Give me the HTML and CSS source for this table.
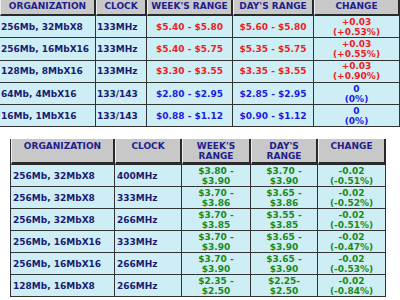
FILE: index.html
```html
<!DOCTYPE html>
<html lang="en">
<head>
  <meta charset="UTF-8">
  <title>DRAM Spot Prices</title>
  <link rel="stylesheet" href="styles.css">
</head>
<body>
  <table class="prices top">
    <colgroup>
      <col class="c-org"><col class="c-clk"><col class="c-wk"><col class="c-day"><col class="c-chg">
    </colgroup>
    <thead>
      <tr>
        <th>ORGANIZATION</th>
        <th>CLOCK</th>
        <th>WEEK'S RANGE</th>
        <th>DAY'S RANGE</th>
        <th>CHANGE</th>
      </tr>
    </thead>
    <tbody>
      <tr class="up">
        <td class="name">256Mb, 32MbX8</td><td class="name">133MHz</td>
        <td>$5.40 - $5.80</td><td>$5.60 - $5.80</td><td>+0.03<br>(+0.53%)</td>
      </tr>
      <tr class="up">
        <td class="name">256Mb, 16MbX16</td><td class="name">133MHz</td>
        <td>$5.40 - $5.75</td><td>$5.35 - $5.75</td><td>+0.03<br>(+0.55%)</td>
      </tr>
      <tr class="up">
        <td class="name">128Mb, 8MbX16</td><td class="name">133MHz</td>
        <td>$3.30 - $3.55</td><td>$3.35 - $3.55</td><td>+0.03<br>(+0.90%)</td>
      </tr>
      <tr class="flat">
        <td class="name">64Mb, 4MbX16</td><td class="name">133/143</td>
        <td>$2.80 - $2.95</td><td>$2.85 - $2.95</td><td>0<br>(0%)</td>
      </tr>
      <tr class="flat">
        <td class="name">16Mb, 1MbX16</td><td class="name">133/143</td>
        <td>$0.88 - $1.12</td><td>$0.90 - $1.12</td><td>0<br>(0%)</td>
      </tr>
    </tbody>
  </table>

  <table class="prices bottom">
    <colgroup>
      <col class="c-org"><col class="c-clk"><col class="c-wk"><col class="c-day"><col class="c-chg">
    </colgroup>
    <thead>
      <tr>
        <th>ORGANIZATION</th>
        <th>CLOCK</th>
        <th>WEEK'S<br>RANGE</th>
        <th>DAY'S<br>RANGE</th>
        <th>CHANGE</th>
      </tr>
    </thead>
    <tbody>
      <tr class="down">
        <td class="name">256Mb, 32MbX8</td><td class="name">400MHz</td>
        <td>$3.80 -<br>$3.90</td><td>$3.70 -<br>$3.90</td><td>-0.02<br>(-0.51%)</td>
      </tr>
      <tr class="down">
        <td class="name">256Mb, 32MbX8</td><td class="name">333MHz</td>
        <td>$3.70 -<br>$3.86</td><td>$3.65 -<br>$3.86</td><td>-0.02<br>(-0.52%)</td>
      </tr>
      <tr class="down">
        <td class="name">256Mb, 32MbX8</td><td class="name">266MHz</td>
        <td>$3.70 -<br>$3.85</td><td>$3.55 -<br>$3.85</td><td>-0.02<br>(-0.51%)</td>
      </tr>
      <tr class="down">
        <td class="name">256Mb, 16MbX16</td><td class="name">333MHz</td>
        <td>$3.70 -<br>$3.90</td><td>$3.65 -<br>$3.90</td><td>-0.02<br>(-0.47%)</td>
      </tr>
      <tr class="down">
        <td class="name">256Mb, 16MbX16</td><td class="name">266MHz</td>
        <td>$3.70 -<br>$3.90</td><td>$3.65 -<br>$3.90</td><td>-0.02<br>(-0.53%)</td>
      </tr>
      <tr class="down">
        <td class="name">128Mb, 16MbX8</td><td class="name">266MHz</td>
        <td>$2.35 -<br>$2.50</td><td>$2.25-<br>$2.50</td><td>-0.02<br>(-0.84%)</td>
      </tr>
    </tbody>
  </table>
</body>
</html>
```

FILE: styles.css
```css
body {
  margin: 0;
  background: #fff;
  font-family: "DejaVu Sans", Verdana, sans-serif;
  font-weight: bold;
  font-size: 9px;
}
.prices {
  border-collapse: separate;
  border-spacing: 0;
  table-layout: fixed;
}
.prices th {
  background: #c8c8c8;
  color: #1e1e8e;
  text-align: center;
  vertical-align: top;
  border-left: 1px solid #eeeeee;
  border-right: 2px solid #2a2a2a;
  border-bottom: 2px solid #2a2a2a;
  padding: 1px 0;
  line-height: 11px;
  overflow: hidden;
  white-space: nowrap;
}
.prices td {
  background: #cdeef4;
  text-align: center;
  vertical-align: middle;
  border-right: 1px solid #333;
  border-bottom: 1px solid #333;
  padding: 0 1px;
  height: 21px;
  line-height: 10px;
  white-space: nowrap;
}
.prices td.name {
  text-align: left;
  color: #1a1a70;
}
.up td { color: #ee1c24; }
.flat td { color: #1c1ce0; }
.down td { color: #1a8a1a; }

/* top table: cut at page edge */
.top {
  width: 400px;
}
.top th {
  padding: 1px 0 2px;
}
.top td {
  height: 21.3px;
}
.top col.c-org { width: 96px; }
.top col.c-clk { width: 51px; }
.top col.c-wk { width: 86px; }
.top col.c-day { width: 81px; }
.top col.c-chg { width: 86px; }

/* bottom table */
.bottom {
  width: 375px;
  margin: 12px 0 0 10px;
  border-left: 1px solid #333;
}
.bottom col.c-org { width: 104px; }
.bottom col.c-clk { width: 67px; }
.bottom col.c-wk { width: 69px; }
.bottom col.c-day { width: 67px; }
.bottom col.c-chg { width: 68px; }
.bottom th {
  padding: 2px 0 1px;
  line-height: 10px;
  border-bottom-width: 3px;
}
.bottom td.name {
  padding-left: 2px;
}
```
